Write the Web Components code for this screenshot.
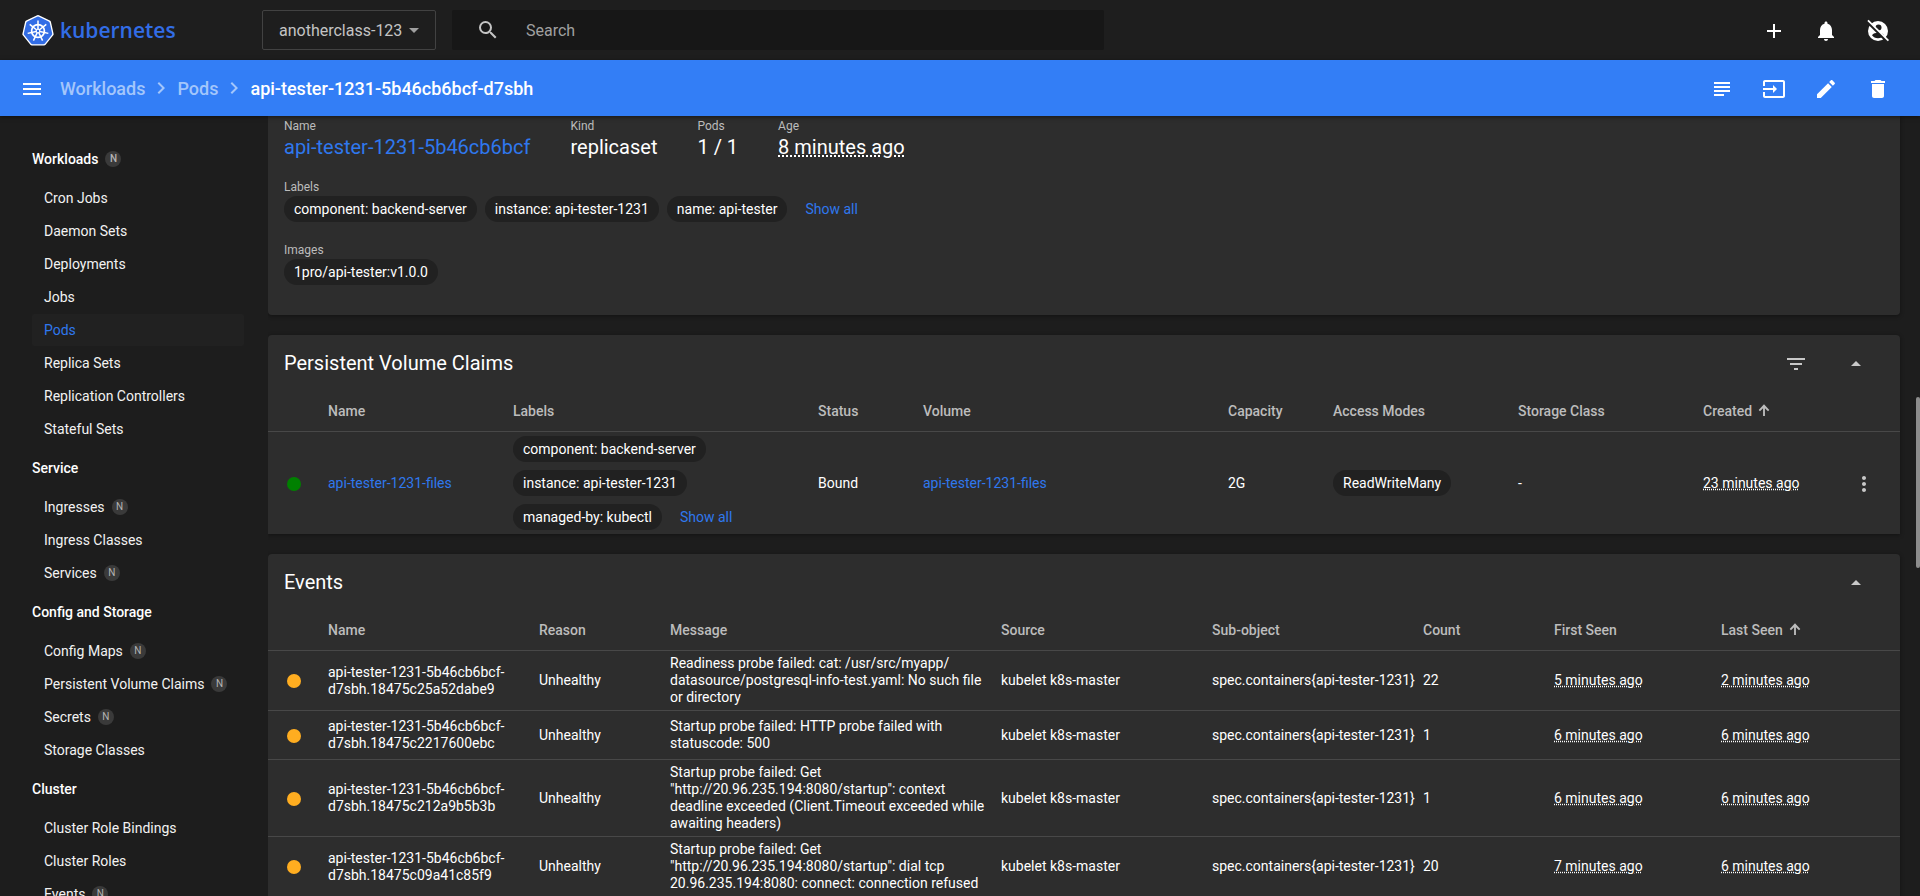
<!DOCTYPE html>
<html lang="en">
<head>
<meta charset="utf-8">
<title>Kubernetes Dashboard</title>
<style>
  html, body { height: 100%; margin: 0; }
  body {
    font-family: Roboto, "Liberation Sans", sans-serif;
    font-size: 14px;
    color: #fff;
    background: #1d1d1d;
    overflow: hidden;
    --card: #2d2d2d;
    --chip: #212121;
    --line: #484848;
    --link: #2f78ee;
    --muted: #bcbcbc;
  }
</style>
</head>
<body>
<kd-app></kd-app>

<script>
const ICONS = {
  search: 'M15.5 14h-.79l-.28-.27A6.47 6.47 0 0 0 16 9.5 6.5 6.5 0 1 0 9.5 16c1.61 0 3.09-.59 4.23-1.57l.27.28v.79l5 4.99L20.49 19l-4.99-5zm-6 0C7.01 14 5 11.99 5 9.5S7.01 5 9.5 5 14 7.01 14 9.5 11.99 14 9.5 14z',
  add: 'M19 13h-6v6h-2v-6H5v-2h6V5h2v6h6v2z',
  bell: 'M12 22c1.1 0 2-.9 2-2h-4c0 1.1.9 2 2 2zm6-6v-5c0-3.07-1.63-5.64-4.5-6.32V4c0-.83-.67-1.5-1.5-1.5s-1.5.67-1.5 1.5v.68C7.64 5.36 6 7.92 6 11v5l-2 2v1h16v-1l-2-2z',
  subject: 'M14 17H4v2h10v-2zm6-8H4v2h16V9zM4 15h16v-2H4v2zM4 5v2h16V5H4z',
  input: 'M21 3.01H3c-1.1 0-2 .9-2 2V9h2V4.99h18v14.03H3V15H1v4.01c0 1.1.9 1.98 2 1.98h18c1.1 0 2-.88 2-1.98v-14c0-1.11-.9-2-2-2zM11 16l4-4-4-4v3H1v2h10v3z',
  edit: 'M3 17.25V21h3.75L17.81 9.94l-3.75-3.75L3 17.25zM20.71 7.04c.39-.39.39-1.02 0-1.41l-2.34-2.34c-.39-.39-1.02-.39-1.41 0l-1.83 1.83 3.75 3.75 1.83-1.83z',
  delete: 'M6 19c0 1.1.9 2 2 2h8c1.1 0 2-.9 2-2V7H6v12zM19 4h-3.5l-1-1h-5l-1 1H5v2h14V4z',
  menu: 'M3 18h18v-2H3v2zm0-5h18v-2H3v2zm0-7v2h18V6H3z',
  chevron: 'M10 6L8.59 7.41 13.17 12l-4.58 4.59L10 18l6-6z',
  filter: 'M10 18h4v-2h-4v2zM3 6v2h18V6H3zm3 7h12v-2H6v2z',
  up: 'M7 14l5-5 5 5z',
  down: 'M7 10l5 5 5-5z',
  more: 'M12 8c1.1 0 2-.9 2-2s-.9-2-2-2-2 .9-2 2 .9 2 2 2zm0 2c-1.1 0-2 .9-2 2s.9 2 2 2 2-.9 2-2-.9-2-2-2zm0 6c-1.1 0-2 .9-2 2s.9 2 2 2 2-.9 2-2-.9-2-2-2z',
  arrow: 'M4 12l2 2L10.600 9.400V21h2.800V9.400L18 14l2-2-8-8.500z'
};

function define(name, html, init) {
  const tpl = document.createElement('template');
  tpl.innerHTML = html;
  customElements.define(name, class extends HTMLElement {
    constructor() {
      super();
      this.attachShadow({ mode: 'open' }).append(tpl.content.cloneNode(true));
    }
    connectedCallback() { if (init) init.call(this, this.shadowRoot); }
  });
}

define('kd-icon', `
  <style>
    :host { display: block; width: 24px; height: 24px; flex: none; }
    svg { display: block; width: 100%; height: 100%; fill: currentColor; }
  </style>
  <svg viewBox="0 0 24 24" aria-hidden="true"></svg>`, function (root) {
  const name = this.getAttribute('name');
  const svg = root.querySelector('svg');
  if (name === 'user-off') {
    svg.innerHTML = `
      <defs><mask id="m"><rect width="24" height="24" fill="#fff"/>
        <circle cx="12.500" cy="8.500" r="3" fill="#000"/>
        <path d="M6 16.200C7.200 14.500 9.500 13.800 12 13.800s4.800.7 6 2.400A7.300 7.300 0 0 1 12 19.200a7.300 7.300 0 0 1-6-3z" fill="#000"/>
        <path d="M1.500 2.800L21.500 22.800" stroke="#000" stroke-width="3"/></mask></defs>
      <circle cx="12" cy="12" r="10" mask="url(#m)"/>
      <path d="M2 1.300L22.400 21.700" stroke="currentColor" stroke-width="1.700"/>`;
  } else {
    svg.innerHTML = `<path d="${ICONS[name]}"/>`;
  }
});

define('kd-icon-button', `
  <style>
    :host { display: block; flex: none; }
    button { display: grid; place-items: center; box-sizing: border-box; width: 40px; height: 40px; padding: 2px 0 0; border: 0; background: none; color: inherit; cursor: pointer; }
  </style>
  <button type="button"><slot></slot></button>`, function (root) {
  root.querySelector('button').setAttribute('aria-label', this.getAttribute('label'));
});

define('kd-logo', `
  <style>
    :host { display: block; flex: none; }
    a { display: flex; align-items: center; gap: 6px; color: #326de6; text-decoration: none; font: 600 21px/32px "Open Sans", sans-serif; }
    svg { display: block; width: 32px; height: 34px; }
  </style>
  <a href="#"><svg viewBox="-16 -17 32 34" aria-hidden="true"><g id="mark"></g></svg><span>kubernetes</span></a>`, function (root) {
  const pt = (r, i, cy = 0) => {
    const a = (i * 360 / 7 - 90) * Math.PI / 180;
    return (r * Math.cos(a)).toFixed(2) + ' ' + (r * Math.sin(a) + cy).toFixed(2);
  };
  const idx = [0, 1, 2, 3, 4, 5, 6];
  const poly = r => 'M' + idx.map(i => pt(r, i, 1)).join('L') + 'Z';
  root.getElementById('mark').innerHTML = `
    <path d="${poly(14)}" fill="#fff" stroke="#fff" stroke-width="4" stroke-linejoin="round"/>
    <path d="${poly(12.500)}" fill="#326de6" stroke="#326de6" stroke-width="4" stroke-linejoin="round"/>
    <g fill="none" stroke="#fff">
      <circle r="6.400" cy="1" stroke-width="1.700"/>
      <path d="${idx.map(i => 'M' + pt(2, i, 1) + 'L' + pt(10.600, i, 1)).join('')}" stroke-width="1.500"/>
      <circle r="1.800" cy="1" stroke-width="1.200"/>
    </g>`;
});

define('kd-topbar', `
  <style>
    :host { display: flex; align-items: center; height: 60px; box-sizing: border-box; padding: 0 22px; background: #1e1e1e; flex: none; }
    .brand { width: 240px; flex: none; }
    .ns { position: relative; flex: none; }
    select { appearance: none; display: block; box-sizing: border-box; width: 174px; height: 40px; padding: 0 32px 0 16px; border: 1px solid #424242; border-radius: 2px; background: none; color: #c4c4c4; font: 16px Roboto, sans-serif; }
    .ns kd-icon { position: absolute; right: 10px; top: 8px; color: #a0a0a0; pointer-events: none; }
    .search { display: flex; align-items: center; gap: 26px; flex: 0 1 652px; height: 40px; margin-left: 16px; box-sizing: border-box; padding: 0 24px; background: #171717; border-radius: 2px; color: #c4c4c4; }
    input { flex: 1; min-width: 0; padding: 0; border: 0; outline: 0; background: none; color: #fff; font: 16px Roboto, sans-serif; }
    input::placeholder { color: #a0a0a0; opacity: 1; }
    .actions { display: flex; gap: 12px; margin-left: auto; }
  </style>
  <kd-logo class="brand"></kd-logo>
  <div class="ns"><select aria-label="Namespace"><option>anotherclass-123</option></select><kd-icon name="down"></kd-icon></div>
  <label class="search"><kd-icon name="search"></kd-icon><input type="text" placeholder="Search" aria-label="Search"></label>
  <div class="actions">
    <kd-icon-button label="Create"><kd-icon name="add"></kd-icon></kd-icon-button>
    <kd-icon-button label="Notifications"><kd-icon name="bell"></kd-icon></kd-icon-button>
    <kd-icon-button label="User"><kd-icon name="user-off"></kd-icon></kd-icon-button>
  </div>`);

define('kd-actionbar', `
  <style>
    :host { display: flex; align-items: center; height: 56px; box-sizing: border-box; padding: 0 22px 0 12px; background: #337ef6; flex: none; position: relative; z-index: 1; box-shadow: 0 1px 4px rgba(0,0,0,.5); }
    nav { display: flex; align-items: center; gap: 4px; margin-left: 8px; font-size: 18px; font-weight: 500; }
    nav a { color: #a3c6fb; text-decoration: none; }
    nav kd-icon { color: #a3c6fb; }
    .actions { display: flex; gap: 12px; margin-left: auto; }
  </style>
  <kd-icon-button label="Menu"><kd-icon name="menu"></kd-icon></kd-icon-button>
  <nav aria-label="Breadcrumb">
    <a href="#">Workloads</a><kd-icon name="chevron"></kd-icon><a href="#">Pods</a><kd-icon name="chevron"></kd-icon><span>api-tester-1231-5b46cb6bcf-d7sbh</span>
  </nav>
  <div class="actions">
    <kd-icon-button label="View logs"><kd-icon name="subject"></kd-icon></kd-icon-button>
    <kd-icon-button label="Exec into pod"><kd-icon name="input"></kd-icon></kd-icon-button>
    <kd-icon-button label="Edit"><kd-icon name="edit"></kd-icon></kd-icon-button>
    <kd-icon-button label="Delete"><kd-icon name="delete"></kd-icon></kd-icon-button>
  </div>`);

const BADGE = `.n { display: grid; place-items: center; width: 16px; height: 16px; border-radius: 50%; background: #3a3a3a; color: #b4b4b4; font-size: 10px; line-height: 16px; }`;

define('kd-nav-item', `
  <style>
    :host { display: block; margin-bottom: 1px; }
    a { display: flex; align-items: center; gap: 7px; height: 32px; padding-left: 12px; border-radius: 2px; color: #f2f2f2; text-decoration: none; }
    :host([active]) a { background: #212121; color: var(--link); }
    ${BADGE}
  </style>
  <a href="#"><slot></slot></a>`, function (root) {
  if (this.hasAttribute('n')) root.querySelector('a').insertAdjacentHTML('beforeend', '<span class="n">N</span>');
});

define('kd-nav-group', `
  <style>
    :host { display: block; }
    a { display: flex; align-items: center; gap: 7px; height: 43px; margin-bottom: 2px; color: #fff; font-weight: 500; text-decoration: none; }
    ${BADGE}
  </style>
  <a href="#"><span id="t"></span></a><slot></slot>`, function (root) {
  root.getElementById('t').textContent = this.getAttribute('heading');
  if (this.hasAttribute('n')) root.querySelector('a').insertAdjacentHTML('beforeend', '<span class="n">N</span>');
});

define('kd-sidebar', `
  <style>
    :host { display: block; width: 212px; flex: none; padding: 21px 24px 0 32px; overflow: hidden; }
  </style>
  <nav aria-label="Resources">
    <kd-nav-group heading="Workloads" n>
      <kd-nav-item>Cron Jobs</kd-nav-item><kd-nav-item>Daemon Sets</kd-nav-item><kd-nav-item>Deployments</kd-nav-item><kd-nav-item>Jobs</kd-nav-item><kd-nav-item active>Pods</kd-nav-item><kd-nav-item>Replica Sets</kd-nav-item><kd-nav-item>Replication Controllers</kd-nav-item><kd-nav-item>Stateful Sets</kd-nav-item>
    </kd-nav-group>
    <kd-nav-group heading="Service">
      <kd-nav-item n>Ingresses</kd-nav-item><kd-nav-item>Ingress Classes</kd-nav-item><kd-nav-item n>Services</kd-nav-item>
    </kd-nav-group>
    <kd-nav-group heading="Config and Storage">
      <kd-nav-item n>Config Maps</kd-nav-item><kd-nav-item n>Persistent Volume Claims</kd-nav-item><kd-nav-item n>Secrets</kd-nav-item><kd-nav-item>Storage Classes</kd-nav-item>
    </kd-nav-group>
    <kd-nav-group heading="Cluster">
      <kd-nav-item>Cluster Role Bindings</kd-nav-item><kd-nav-item>Cluster Roles</kd-nav-item><kd-nav-item n>Events</kd-nav-item>
    </kd-nav-group>
  </nav>`);

define('kd-chip', `
  <style>:host { display: block; flex: none; padding: 0 10px; border-radius: 13px; background: var(--chip); line-height: 26px; white-space: nowrap; }</style>
  <slot></slot>`);

define('kd-property', `
  <style>
    :host { display: block; }
    .k { margin-bottom: 1px; color: var(--muted); font-size: 12px; line-height: 16px; }
  </style>
  <div class="k" id="k"></div><slot></slot>`, function (root) {
  root.getElementById('k').textContent = this.getAttribute('heading');
});

define('kd-owner-card', `
  <style>
    :host { display: flex; flex-direction: column; gap: 20px; padding: 2px 16px 30px; background: var(--card); border-radius: 0 0 4px 4px; box-shadow: 0 1px 4px rgba(0,0,0,.4); }
    .row { display: flex; gap: 40px; }
    .v { font-size: 20px; line-height: 24px; }
    .chips { display: flex; gap: 8px; align-items: center; }
    a { color: var(--link); text-decoration: none; }
    .all { margin-left: 10px; }
    time { text-decoration: underline dotted; }
  </style>
  <div class="row">
    <kd-property heading="Name"><a class="v" href="#">api-tester-1231-5b46cb6bcf</a></kd-property>
    <kd-property heading="Kind"><div class="v">replicaset</div></kd-property>
    <kd-property heading="Pods"><div class="v">1 / 1</div></kd-property>
    <kd-property heading="Age"><div class="v"><time>8 minutes ago</time></div></kd-property>
  </div>
  <kd-property heading="Labels"><div class="chips"><kd-chip>component: backend-server</kd-chip><kd-chip>instance: api-tester-1231</kd-chip><kd-chip>name: api-tester</kd-chip><a class="all" href="#">Show all</a></div></kd-property>
  <kd-property heading="Images"><div class="chips"><kd-chip>1pro/api-tester:v1.0.0</kd-chip></div></kd-property>`);

define('kd-card', `
  <style>
    :host { display: block; background: var(--card); border-radius: 4px 4px 0 0; box-shadow: 0 1px 4px rgba(0,0,0,.4); }
    header { display: flex; align-items: center; height: 56px; padding: 0 24px 0 16px; }
    h2 { flex: 1; margin: 0; font-size: 20px; font-weight: 400; }
    .tools { display: flex; gap: 20px; color: #c8c8c8; }
  </style>
  <header><h2 id="h"></h2><div class="tools"><slot name="tools"></slot><kd-icon-button label="Collapse"><kd-icon name="up"></kd-icon></kd-icon-button></div></header>
  <slot></slot>`, function (root) {
  root.getElementById('h').textContent = this.getAttribute('heading');
});

const TABLE = `
  :host { display: block; }
  table { width: 100%; table-layout: fixed; border-collapse: separate; border-spacing: 0; line-height: 17px; }
  th { height: 40px; padding: 0 8px 0 0; border-bottom: 1px solid var(--line); color: var(--muted); font-weight: 500; text-align: left; white-space: nowrap; }
  td { padding: 4px 8px 4px 0; }
  th kd-icon { display: inline-block; width: 16px; height: 16px; margin-left: 4px; vertical-align: -2px; }
  a { color: var(--link); text-decoration: none; }
  time { text-decoration: underline dotted; }
  .dot { display: block; width: 14px; height: 14px; margin: 1px 0 0 19px; border-radius: 50%; }`;

define('kd-volume-claims', `
  <style>
    ${TABLE}
    .chips { display: flex; flex-wrap: wrap; align-items: center; gap: 8px; }
    .chips a { margin-left: 10px; }
    .dot { background: #008000; }
    kd-chip { width: max-content; }
    kd-icon-button { color: #c8c8c8; }
  </style>
  <table>
    <colgroup><col width="60"><col width="185"><col width="305"><col width="105"><col width="305"><col width="105"><col width="185"><col width="185"><col width="141"><col width="56"></colgroup>
    <thead><tr><th></th><th>Name</th><th>Labels</th><th>Status</th><th>Volume</th><th>Capacity</th><th>Access Modes</th><th>Storage Class</th><th>Created<kd-icon name="arrow"></kd-icon></th><th></th></tr></thead>
    <tbody><tr>
      <td><span class="dot"></span></td>
      <td><a href="#">api-tester-1231-files</a></td>
      <td><div class="chips"><kd-chip>component: backend-server</kd-chip><kd-chip>instance: api-tester-1231</kd-chip><kd-chip>managed-by: kubectl</kd-chip><a href="#">Show all</a></div></td>
      <td>Bound</td>
      <td><a href="#">api-tester-1231-files</a></td>
      <td>2G</td>
      <td><kd-chip>ReadWriteMany</kd-chip></td>
      <td>-</td>
      <td><time>23 minutes ago</time></td>
      <td><kd-icon-button label="Actions"><kd-icon name="more"></kd-icon></kd-icon-button></td>
    </tr></tbody>
  </table>`);

define('kd-events', `
  <style>
    ${TABLE}
    td { height: 40px; border-bottom: 1px solid var(--line); }
    .dot { background: #ffad20; }
    .nw { white-space: nowrap; }
  </style>
  <table>
    <colgroup><col width="60"><col width="211"><col width="131"><col width="331"><col width="211"><col width="211"><col width="131"><col width="167"><col width="179"></colgroup>
    <thead><tr><th></th><th>Name</th><th>Reason</th><th>Message</th><th>Source</th><th>Sub-object</th><th>Count</th><th>First Seen</th><th>Last Seen<kd-icon name="arrow"></kd-icon></th></tr></thead>
    <tbody></tbody>
  </table>`, function (root) {
  const rows = [
    ['18475c25a52dabe9', 'Readiness probe failed: cat: /usr/src/myapp/<wbr>datasource/postgresql-info-test.yaml: No such file or directory', 22, 5, 2],
    ['18475c2217600ebc', 'Startup probe failed: HTTP probe failed with statuscode: 500', 1, 6, 6],
    ['18475c212a9b5b3b', 'Startup probe failed: Get "http://20.96.235.194:8080/startup": context deadline exceeded (Client.Timeout exceeded while awaiting headers)', 1, 6, 6],
    ['18475c09a41c85f9', 'Startup probe failed: Get "http://20.96.235.194:8080/startup": dial tcp 20.96.235.194:8080: connect: connection refused', 20, 7, 6]
  ];
  root.querySelector('tbody').innerHTML = rows.map(([id, msg, count, first, last]) => `
    <tr><td><span class="dot"></span></td><td>api-tester-1231-5b46cb6bcf-d7sbh.${id}</td><td>Unhealthy</td><td>${msg}</td><td>kubelet k8s-master</td><td class="nw">spec.containers{api-tester-1231}</td><td>${count}</td><td><time>${first} minutes ago</time></td><td><time>${last} minutes ago</time></td></tr>`).join('');
});

define('kd-app', `
  <style>
    :host { display: flex; flex-direction: column; height: 100vh; }
    .body { position: relative; display: flex; flex: 1; min-height: 0; }
    main { flex: 1; min-width: 0; display: flex; flex-direction: column; gap: 20px; padding-right: 20px; overflow: hidden; }
    main > * { flex: none; }
    .thumb { position: absolute; right: 0; top: 36%; width: 4px; height: 22%; border-radius: 2px; background: #8c8c8c; }
  </style>
  <kd-topbar></kd-topbar>
  <kd-actionbar></kd-actionbar>
  <div class="body">
    <kd-sidebar></kd-sidebar>
    <main>
      <kd-owner-card></kd-owner-card>
      <kd-card heading="Persistent Volume Claims">
        <kd-icon-button slot="tools" label="Filter"><kd-icon name="filter"></kd-icon></kd-icon-button>
        <kd-volume-claims></kd-volume-claims>
      </kd-card>
      <kd-card heading="Events"><kd-events></kd-events></kd-card>
    </main>
    <div class="thumb"></div>
  </div>`);
</script>
</body>
</html>
